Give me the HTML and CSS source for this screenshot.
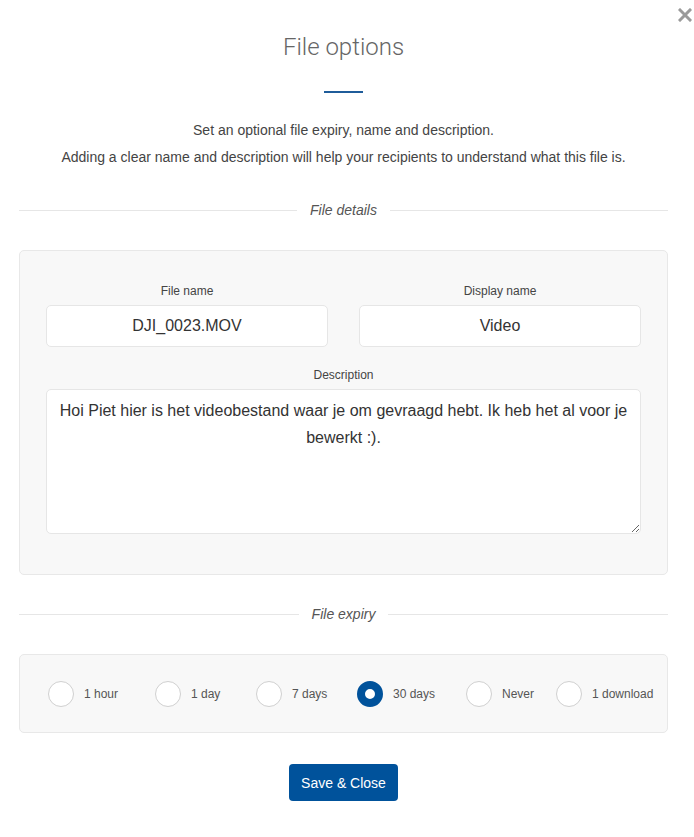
FILE: index.html
```html
<!DOCTYPE html>
<html lang="en">

<head>
    <meta charset="UTF-8" />
    <title>File options</title>
    <link rel="stylesheet" href="styles.css">
</head>

<body>

    <div class="modal">
        <!-- Close button -->
        <button class="close-btn" aria-label="Close">
            <svg width="14" height="14" viewBox="0 0 14 14">
                <path d="M2 2 L12 12 M12 2 L2 12" stroke="#9a9a9a" stroke-width="3" stroke-linecap="square" />
            </svg>
        </button>

        <h1 class="title">File options</h1>
        <div class="title-bar"></div>

        <p class="intro">
            Set an optional file expiry, name and description.<br>
            Adding a clear name and description will help your recipients to understand what this file is.
        </p>

        <!-- File details -->
        <div class="divider"><span>File details</span></div>

        <div class="panel details">
            <div class="row">
                <div class="field">
                    <label>File name</label>
                    <input type="text" value="DJI_0023.MOV">
                </div>
                <div class="field">
                    <label>Display name</label>
                    <input type="text" value="Video">
                </div>
            </div>
            <div class="field">
                <label>Description</label>
                <textarea>Hoi Piet hier is het videobestand waar je om gevraagd hebt. Ik heb het al voor je bewerkt :).</textarea>
            </div>
        </div>

        <!-- File expiry -->
        <div class="divider"><span>File expiry</span></div>

        <div class="panel expiry">
            <label class="radio"><span class="dot"></span>1 hour</label>
            <label class="radio"><span class="dot"></span>1 day</label>
            <label class="radio"><span class="dot"></span>7 days</label>
            <label class="radio selected"><span class="dot"></span>30 days</label>
            <label class="radio"><span class="dot"></span>Never</label>
            <label class="radio"><span class="dot"></span>1 download</label>
        </div>

        <div class="actions">
            <button class="save-btn">Save &amp; Close</button>
        </div>
    </div>

</body>

</html>
```

FILE: styles.css
```css
body {
    margin: 0;
    background: #fff;
    font-family: "Liberation Sans", Arial, sans-serif;
    color: #444;
}

.modal {
    position: relative;
    padding: 31px 26px 0 19px;
}

/* Close */
.close-btn {
    position: absolute;
    top: 8px;
    right: 2px;
    border: none;
    background: none;
    padding: 0;
    cursor: pointer;
}

/* Title */
.title {
    margin: 0;
    font-family: Roboto, "Liberation Sans", sans-serif;
    font-weight: 300;
    font-size: 24px;
    line-height: 32px;
    color: #666;
    text-align: center;
}

.title-bar {
    width: 39px;
    height: 2px;
    margin: 28px auto 0;
    background: #1f5c9a;
}

.intro {
    margin: 24px 0 0;
    font-size: 14px;
    line-height: 27px;
    text-align: center;
    color: #444;
}

/* Divider with text */
.divider {
    display: flex;
    align-items: center;
    gap: 13px;
    margin-top: 31px;
    font-size: 14px;
    font-style: italic;
    color: #555;
    line-height: 16px;
}

.divider::before,
.divider::after {
    content: "";
    flex: 1;
    height: 1px;
    background: #e6e6e6;
}

/* Panels */
.panel {
    margin-top: 32px;
    background: #f8f8f8;
    border: 1px solid #e8e8e8;
    border-radius: 5px;
}

.details {
    padding: 32px 26px 40px;
}

.row {
    display: flex;
    gap: 31px;
    margin-bottom: 20px;
}

.field {
    flex: 1;
    display: flex;
    flex-direction: column;
}

.field label {
    font-size: 12px;
    line-height: 16px;
    text-align: center;
    color: #444;
    margin-bottom: 6px;
}

.field input,
.field textarea {
    font-family: "Liberation Sans", Arial, sans-serif;
    font-size: 16px;
    color: #333;
    text-align: center;
    background: #fff;
    border: 1px solid #e6e6e6;
    border-radius: 5px;
    box-sizing: border-box;
    outline: none;
}

.field input {
    height: 42px;
    padding: 0 10px;
}

.field textarea {
    height: 145px;
    padding: 7px 12px;
    line-height: 27px;
    resize: vertical;
}

/* Expiry radios */
.expiry {
    height: 79px;
    box-sizing: border-box;
    display: grid;
    grid-template-columns: 107px 101px 101px 109px 90px auto;
    align-items: center;
    padding-left: 28px;
}

.radio {
    display: flex;
    align-items: center;
    gap: 10px;
    font-size: 12px;
    color: #555;
    cursor: pointer;
}

.dot {
    width: 26px;
    height: 26px;
    box-sizing: border-box;
    border: 1px solid #d0d0d0;
    border-radius: 50%;
    background: #fff;
}

.radio.selected .dot {
    border: 8px solid #00529b;
}

/* Save */
.actions {
    display: flex;
    justify-content: center;
    margin-top: 31px;
}

.save-btn {
    height: 37px;
    padding: 0 12px;
    font-family: "Liberation Sans", Arial, sans-serif;
    font-size: 14px;
    color: #fff;
    background: #00529b;
    border: none;
    border-radius: 4px;
    cursor: pointer;
}
```
